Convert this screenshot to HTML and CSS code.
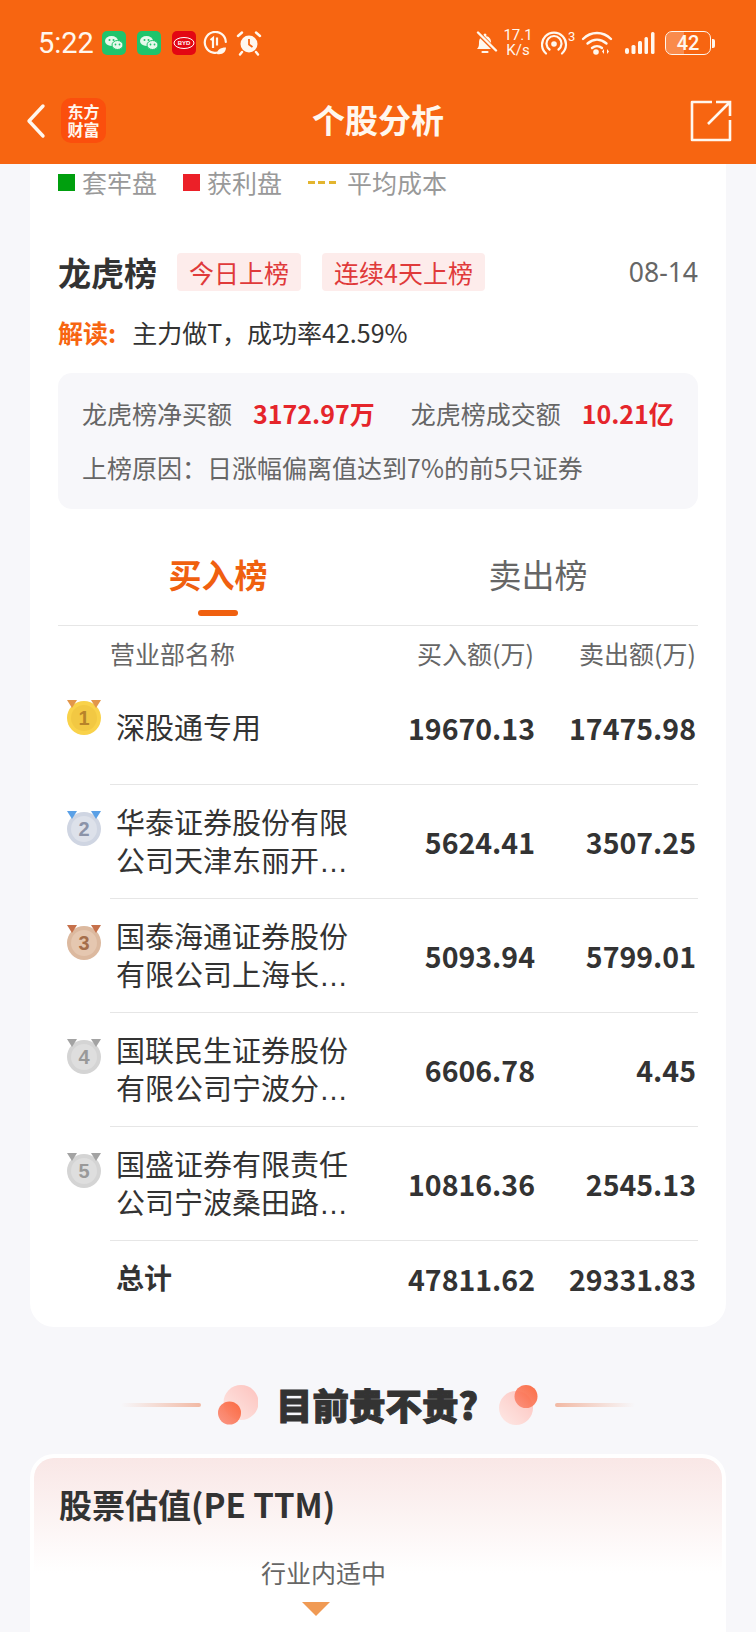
FILE: index.html
```html
<!DOCTYPE html>
<html lang="en">
  <head>
    <meta charset="UTF-8">
    <meta name="viewport" content="width=device-width, initial-scale=1.0">
    <title>个股分析</title>
    <link rel="stylesheet" href="styles.css">
  </head>
  <body>

    <header class="topBar">
      <div class="statusBar">
        <span class="clock">5:22</span>
        <span class="appIcon wechat"><svg width="20" height="16" viewBox="0 0 20 16"><ellipse cx="7.5" cy="6" rx="6.5" ry="5" fill="#e6f9ec"/><circle cx="5.5" cy="5" r="1" fill="#1fc46c"/><circle cx="9.5" cy="5" r="1" fill="#1fc46c"/><ellipse cx="13.5" cy="10" rx="5.5" ry="4.5" fill="#e6f9ec" stroke="#1fc46c"/><circle cx="11.5" cy="9.5" r="0.9" fill="#1fc46c"/><circle cx="15.5" cy="9.5" r="0.9" fill="#1fc46c"/></svg></span>
        <span class="appIcon wechat gapWide"><svg width="20" height="16" viewBox="0 0 20 16"><ellipse cx="7.5" cy="6" rx="6.5" ry="5" fill="#e6f9ec"/><circle cx="5.5" cy="5" r="1" fill="#1fc46c"/><circle cx="9.5" cy="5" r="1" fill="#1fc46c"/><ellipse cx="13.5" cy="10" rx="5.5" ry="4.5" fill="#e6f9ec" stroke="#1fc46c"/><circle cx="11.5" cy="9.5" r="0.9" fill="#1fc46c"/><circle cx="15.5" cy="9.5" r="0.9" fill="#1fc46c"/></svg></span>
        <span class="appIcon byd gapWide"><svg width="22" height="14" viewBox="0 0 22 14"><ellipse cx="11" cy="7" rx="10" ry="5.5" fill="none" stroke="#fff" stroke-width="1"/><text x="11" y="9.2" class="bydText">BYD</text></svg></span>
        <svg class="statusIcon" width="24" height="24" viewBox="0 0 24 24"><path d="M19 19.5A10.5 10.5 0 1 1 22.8 11" fill="none" stroke="#fff7ee" stroke-width="2.2" stroke-linecap="round"/><path d="M7.5 9l2.5-2v10M14 6.5v8" fill="none" stroke="#fff7ee" stroke-width="2.2"/><path d="M14 23c0-4 3-6.5 9-6.5 0 4-3 7.5-9 6.5z" fill="#fff7ee"/></svg>
        <svg class="statusIcon clockIcon" width="26" height="26" viewBox="0 0 26 26"><circle cx="13" cy="14" r="8.5" fill="#fff7ee"/><path d="M13 9v5.5l3.5 2.5" fill="none" stroke="#f76511" stroke-width="1.8"/><path d="M2 6l4-3.5M24 6l-4-3.5M6 22l-2 2.5M20 22l2 2.5" stroke="#fff7ee" stroke-width="2.4" stroke-linecap="round"/></svg>

        <div class="statusRight">
          <svg class="bellIcon" width="24" height="24" viewBox="0 0 24 24"><path d="M3 18c2-2 2-4 2-7 0-3 2-6 6-6s6 3 6 6c0 3 1 5 3 7z" fill="#fff7ee"/><circle cx="11" cy="4" r="1.5" fill="#fff7ee"/><path d="M8.5 21h5" stroke="#fff7ee" stroke-width="2.2" stroke-linecap="round"/><path d="M3 1l19 19" stroke="#f76511" stroke-width="4.5"/><path d="M4 1.5l18 18" stroke="#fff7ee" stroke-width="2.4" stroke-linecap="round"/></svg>
          <span class="speed">17.1<br>K/s</span>
          <svg class="ringIcon" width="36" height="28" viewBox="0 0 36 28"><circle cx="13" cy="15" r="2.8" fill="#fff7ee"/><path d="M8.5 20.5a7.5 7.5 0 1 1 9 0M5 24.5a12 12 0 1 1 16 0" fill="none" stroke="#fff7ee" stroke-width="2.2" stroke-linecap="round"/><text x="27" y="12" class="signalNum">3</text></svg>
          <svg class="wifiIcon" width="32" height="26" viewBox="0 0 32 26"><path d="M2 9c8-8 20-8 28 0M6.5 13.5c6-5 13-5 19 0M11 18c3-2.5 7-2.5 10 0" fill="none" stroke="#fff7ee" stroke-width="2.4" stroke-linecap="round"/><circle cx="15" cy="22" r="2.8" fill="#fff7ee"/><path d="M23 19v5l-2-2.5zM26 24v-5l2 2.5z" fill="#fff7ee"/></svg>
          <svg class="barsIcon" width="30" height="24" viewBox="0 0 30 24"><rect x="0" y="17" width="4" height="6" rx="2" fill="#fff7ee"/><rect x="6.5" y="14" width="4" height="9" rx="1.5" fill="#fff7ee"/><rect x="13" y="10" width="4" height="13" rx="1.5" fill="#fff7ee"/><rect x="19.5" y="6" width="3.5" height="17" rx="1.5" fill="#fff7ee"/><rect x="26" y="1" width="3.5" height="22" rx="1.5" fill="#fff7ee"/></svg>
          <div class="battery"><span class="batteryFill" style="width: 42%"></span><span class="batteryNum">42</span></div>
          <span class="batteryTip"></span>
        </div>
      </div>

      <div class="navBar">
        <svg class="backIcon" width="22" height="36" viewBox="0 0 22 36"><path d="M19 3L5 18l14 15" fill="none" stroke="#fff7ee" stroke-width="3.4" stroke-linecap="round" stroke-linejoin="round"/></svg>
        <span class="brandLogo">东方<br>财富</span>
        <h1 class="navTitle">个股分析</h1>
        <svg class="shareIcon" width="42" height="42" viewBox="0 0 42 42"><path d="M22 2H2v38h38V20" fill="none" stroke="#fff7ee" stroke-width="2.6" stroke-linejoin="round"/><path d="M18 24L40 2M26 2h14v14" fill="none" stroke="#fff7ee" stroke-width="2.6"/></svg>
      </div>
    </header>

    <main class="pageBody">
      <section class="card">
        <div class="legend">
          <span class="legendItem"><i class="legendBox green"></i>套牢盘</span>
          <span class="legendItem"><i class="legendBox red"></i>获利盘</span>
          <span class="legendItem"><i class="legendDash"></i>平均成本</span>
        </div>

        <div class="titleRow">
          <h2 class="cardTitle">龙虎榜</h2>
          <span class="tag">今日上榜</span>
          <span class="tag">连续4天上榜</span>
          <span class="dateText">08-14</span>
        </div>

        <p class="reading"><b>解读:</b>主力做T，成功率42.59%</p>

        <div class="summaryBox">
          <div class="summaryRow">
            <span>龙虎榜净买额</span><b class="summaryNum">3172.97万</b>
            <span class="summarySecond">龙虎榜成交额</span><b class="summaryNum">10.21亿</b>
          </div>
          <div class="summaryReason">上榜原因：日涨幅偏离值达到7%的前5只证券</div>
        </div>

        <div class="tabs">
          <span class="tab tabActive">买入榜</span>
          <span class="tab">卖出榜</span>
        </div>

        <div class="tableHead">
          <span class="colName">营业部名称</span>
          <span class="colNum">买入额(万)</span>
          <span class="colNum">卖出额(万)</span>
        </div>

        <div class="tableRow rowFirst">
          <span class="medal gold"><em>1</em></span>
          <span class="rowName">深股通专用</span>
          <span class="colNum">19670.13</span>
          <span class="colNum">17475.98</span>
        </div>
        <div class="tableRow">
          <span class="medal silver"><em>2</em></span>
          <span class="rowName">华泰证券股份有限<br>公司天津东丽开…</span>
          <span class="colNum">5624.41</span>
          <span class="colNum">3507.25</span>
        </div>
        <div class="tableRow">
          <span class="medal bronze"><em>3</em></span>
          <span class="rowName">国泰海通证券股份<br>有限公司上海长…</span>
          <span class="colNum">5093.94</span>
          <span class="colNum">5799.01</span>
        </div>
        <div class="tableRow">
          <span class="medal gray"><em>4</em></span>
          <span class="rowName">国联民生证券股份<br>有限公司宁波分…</span>
          <span class="colNum">6606.78</span>
          <span class="colNum">4.45</span>
        </div>
        <div class="tableRow">
          <span class="medal gray"><em>5</em></span>
          <span class="rowName">国盛证券有限责任<br>公司宁波桑田路…</span>
          <span class="colNum">10816.36</span>
          <span class="colNum">2545.13</span>
        </div>
        <div class="tableRow rowTotal">
          <span class="rowName">总计</span>
          <span class="colNum">47811.62</span>
          <span class="colNum">29331.83</span>
        </div>
      </section>

      <div class="sectionHead">
        <span class="headLine lineLeft"></span>
        <svg class="dotsLeft" width="40" height="40" viewBox="0 0 40 40"><defs><linearGradient id="bigDot" x1="1" y1="0" x2="0" y2="1"><stop offset="0" stop-color="#fdc2bd"/><stop offset="1" stop-color="#fde9e6"/></linearGradient><linearGradient id="smallDot" x1="1" y1="0" x2="0" y2="1"><stop offset="0" stop-color="#fb5a2c"/><stop offset="1" stop-color="#fb8a76"/></linearGradient></defs><circle cx="23" cy="17.5" r="17.5" fill="url(#bigDot)"/><circle cx="11.5" cy="28" r="11.5" fill="url(#smallDot)" opacity="0.88"/></svg>
        <h2 class="headText">目前贵不贵?</h2>
        <svg class="dotsRight" width="40" height="40" viewBox="0 0 40 40"><circle cx="17" cy="23" r="17" fill="url(#bigDot)"/><circle cx="27" cy="11.5" r="11.5" fill="url(#smallDot)" opacity="0.88"/></svg>
        <span class="headLine lineRight"></span>
      </div>

      <section class="valueCard">
        <h2 class="valueTitle">股票估值(PE TTM)</h2>
        <div class="pointerWrap">
          <span class="pointerText">行业内适中</span>
          <span class="pointerArrow"></span>
        </div>
      </section>
    </main>

  </body>
</html>
```

FILE: styles.css
```css
* {
  box-sizing: border-box;
}

html, body {
  height: 1632px;
  overflow: hidden;
}

body {
  margin: 0;
  font-family: "Noto Sans CJK SC", "Noto Sans", sans-serif;
  background-color: #f7f7fa;
  color: #333333;
}

/* top */
.topBar {
  height: 164px;
  background-color: #f76511;
  color: #fff7ee;
  overflow: hidden;
}

.statusBar {
  display: flex;
  align-items: center;
  height: 60px;
  margin-top: 13px;
  padding: 0 41px 0 38px;
}

.clock {
  width: 64px;
  font-family: Roboto, sans-serif;
  font-size: 29px;
}

.appIcon {
  width: 24px;
  height: 24px;
  border-radius: 5px;
  display: flex;
  align-items: center;
  justify-content: center;
}

.wechat {
  background-color: #1fc46c;
}

.byd {
  background-color: #e30713;
}

.bydText {
  font-family: "Liberation Sans", sans-serif;
  font-size: 6px;
  font-weight: 700;
  text-anchor: middle;
  fill: white;
}

.gapWide {
  margin-left: 11px;
}

.statusIcon {
  margin-left: 7px;
}

.clockIcon {
  margin-left: 9px;
}

.statusRight {
  margin-left: auto;
  display: flex;
  align-items: center;
}

.speed {
  width: 30px;
  margin-left: 5px;
  font-family: Roboto, sans-serif;
  font-size: 15px;
  line-height: 15px;
  text-align: center;
}

.ringIcon {
  margin-left: 8px;
}

.signalNum {
  font-family: Roboto, sans-serif;
  font-size: 13px;
  fill: #fff7ee;
}

.wifiIcon {
  margin-left: 4px;
}

.barsIcon {
  margin-left: 12px;
}

.battery {
  position: relative;
  width: 46px;
  height: 24px;
  margin-left: 10px;
  border: 1.5px solid #fff7ee;
  border-radius: 7px;
  overflow: hidden;
  display: flex;
  align-items: center;
  justify-content: center;
}

.batteryFill {
  position: absolute;
  left: 0;
  top: 0;
  bottom: 0;
  background-color: rgba(255, 255, 255, 0.25);
}

.batteryNum {
  position: relative;
  font-family: Roboto, sans-serif;
  font-size: 20px;
  font-weight: 500;
  line-height: 20px;
}

.batteryTip {
  width: 3px;
  height: 9px;
  margin-left: 1px;
  background-color: #fff7ee;
  border-radius: 0 2px 2px 0;
}

.navBar {
  position: relative;
  height: 91px;
  margin-top: 2px;
  padding: 0 24px;
  display: flex;
  align-items: center;
}

.brandLogo {
  width: 45px;
  height: 45px;
  margin-left: 15px;
  border-radius: 10px;
  background-color: #fb4f0d;
  font-weight: 700;
  font-size: 16px;
  line-height: 18px;
  text-align: center;
  padding-top: 4px;
}

.navTitle {
  position: absolute;
  left: 50%;
  width: 200px;
  margin: -3px 0 0 -100px;
  text-align: center;
  font-size: 33px;
  font-weight: 700;
  line-height: 44px;
}

.shareIcon {
  margin-left: auto;
}

/* card */
.pageBody {
  padding: 0 30px;
}

.card {
  height: 1163px;
  background-color: white;
  border-radius: 0 0 24px 24px;
  padding: 0 28px;
}

.legend {
  display: flex;
  gap: 26px;
  height: 36px;
  align-items: center;
  font-size: 25px;
  color: #999999;
}

.legendItem {
  display: flex;
  align-items: center;
}

.legendBox {
  width: 17px;
  height: 17px;
  margin-right: 7px;
}

.green {
  background-color: #009f0e;
}

.red {
  background-color: #ec2028;
}

.legendDash {
  width: 28px;
  height: 3px;
  margin-right: 11px;
  background-image: repeating-linear-gradient(to right, #e3b52f 0, #e3b52f 7px, transparent 7px, transparent 10.5px);
}

.titleRow {
  display: flex;
  align-items: center;
  margin-top: 52px;
  height: 40px;
}

.cardTitle {
  margin: 0 20px 0 0;
  font-size: 33px;
  font-weight: 700;
}

.tag {
  height: 38px;
  padding: 0 12px;
  margin-right: 21px;
  background-color: #fdeceb;
  border-radius: 4px;
  color: #e03a3a;
  font-size: 25px;
  line-height: 38px;
}

.dateText {
  margin-left: auto;
  font-family: "Noto Sans", sans-serif;
  color: #666666;
  font-size: 26.5px;
}

.reading {
  margin: 23px 0 0;
  height: 34px;
  font-size: 25px;
  line-height: 34px;
}

.reading b {
  color: #f76511;
  margin-right: 16px;
}

.summaryBox {
  height: 136px;
  margin-top: 24px;
  padding: 23px 20px 0 24px;
  background-color: #f7f7fa;
  border-radius: 14px;
  color: #666666;
  font-size: 25px;
  white-space: nowrap;
}

.summaryRow {
  display: flex;
  align-items: center;
  height: 34px;
}

.summaryNum {
  margin-left: 21px;
  color: #e5252b;
}

.summarySecond {
  margin-left: 36px;
}

.summaryReason {
  margin-top: 20px;
  line-height: 34px;
}

.tabs {
  height: 117px;
  display: flex;
  border-bottom: 1px solid #e6e6e6;
}

.tab {
  position: relative;
  width: 50%;
  padding-top: 41px;
  text-align: center;
  font-size: 33px;
  color: #666666;
}

.tabActive {
  color: #f0600f;
  font-weight: 700;
}

.tabActive::after {
  content: "";
  position: absolute;
  left: 50%;
  bottom: 9px;
  width: 40px;
  height: 6px;
  margin-left: -20px;
  border-radius: 3px;
  background-color: #f0600f;
}

.tableHead {
  display: flex;
  align-items: center;
  height: 52px;
  padding: 2px 2px 0 0;
  font-size: 25px;
  color: #666666;
}

.colName {
  flex: 1;
  padding-left: 52px;
}

.colNum {
  width: 162px;
  text-align: right;
}

.tableRow {
  position: relative;
  display: flex;
  align-items: center;
  height: 114px;
  margin-left: 52px;
  padding-right: 2px;
  border-top: 1px solid #e6e6e6;
  font-size: 29px;
}

.tableRow .colNum {
  font-weight: 700;
  font-size: 28.5px;
}

.tableRow .colNum:last-child {
  width: 161px;
}

.rowFirst {
  height: 106px;
  padding-bottom: 8px;
  border-top: none;
}

.rowName {
  flex: 1;
  padding: 3px 0 0 6px;
  font-family: "Liberation Sans", "Noto Sans CJK SC", sans-serif;
  line-height: 38px;
  white-space: nowrap;
}

.rowTotal {
  height: 76px;
}

.rowTotal .rowName {
  font-weight: 700;
  font-size: 28px;
}

.medal {
  position: absolute;
  left: -43px;
  top: 27px;
  width: 34px;
  height: 34px;
  border-radius: 50%;
  display: flex;
  align-items: center;
  justify-content: center;
}

.rowFirst .medal {
  top: 23px;
}

.medal::before,
.medal::after {
  content: "";
  position: absolute;
  top: -1px;
  width: 0;
  height: 0;
  border-top: 8px solid #e2964a;
  border-left: 5px solid transparent;
  border-right: 5px solid transparent;
}

.medal::before {
  left: 0;
}

.medal::after {
  right: 0;
}

.medal em {
  width: 26px;
  height: 26px;
  border-radius: 50%;
  font-family: "Liberation Sans", sans-serif;
  font-style: normal;
  font-weight: 700;
  font-size: 20px;
  line-height: 26px;
  text-align: center;
}

.gold {
  background-color: #f9d24a;
}

.gold em {
  background-color: #f2c843;
  color: #b7832a;
}

.silver {
  background-color: #cfd5e2;
}

.silver em {
  background-color: #dde1ea;
  color: #8b93a8;
}

.silver::before,
.silver::after {
  border-top-color: #5aa0e6;
}

.bronze {
  background-color: #dcb99f;
}

.bronze em {
  background-color: #e5c7b0;
  color: #a56e4b;
}

.bronze::before,
.bronze::after {
  border-top-color: #c6704a;
}

.gray {
  background-color: #d4d4d4;
}

.gray em {
  background-color: #dedede;
  color: #999999;
}

.gray::before,
.gray::after {
  border-top-color: #a3a3a3;
}

/* section head */
.sectionHead {
  height: 127px;
  padding-top: 29px;
  display: flex;
  align-items: center;
  justify-content: center;
}

.headLine {
  width: 80px;
  height: 4px;
  border-radius: 2px;
}

.lineLeft {
  background-image: linear-gradient(to right, #f7f7fa, #f2b9a4);
}

.lineRight {
  background-image: linear-gradient(to right, #f2b9a4, #f7f7fa);
}

.dotsLeft {
  margin: 0 18px 0 17px;
}

.dotsRight {
  margin: 0 16px 0 21px;
}

.headText {
  margin: 0;
  font-size: 36.5px;
  font-weight: 900;
  line-height: 44px;
  -webkit-text-stroke: 1px #333333;
}

/* second card */
.valueCard {
  height: 178px;
  padding: 24px 25px 0;
  border: 4px solid white;
  border-bottom: none;
  border-radius: 24px 24px 0 0;
  background-image: linear-gradient(to bottom, #f9e7e6, #ffffff 115px);
}

.valueTitle {
  margin: 0;
  font-size: 33px;
  font-weight: 700;
  line-height: 44px;
}

.pointerWrap {
  width: 125px;
  margin: 29px 0 0 202px;
  display: flex;
  flex-direction: column;
  align-items: center;
}

.pointerText {
  font-size: 25px;
  line-height: 34px;
  color: #666666;
}

.pointerArrow {
  margin: 13px 16px 0 0;
  width: 0;
  height: 0;
  border-top: 14px solid #f09a54;
  border-left: 14px solid transparent;
  border-right: 14px solid transparent;
}
```
